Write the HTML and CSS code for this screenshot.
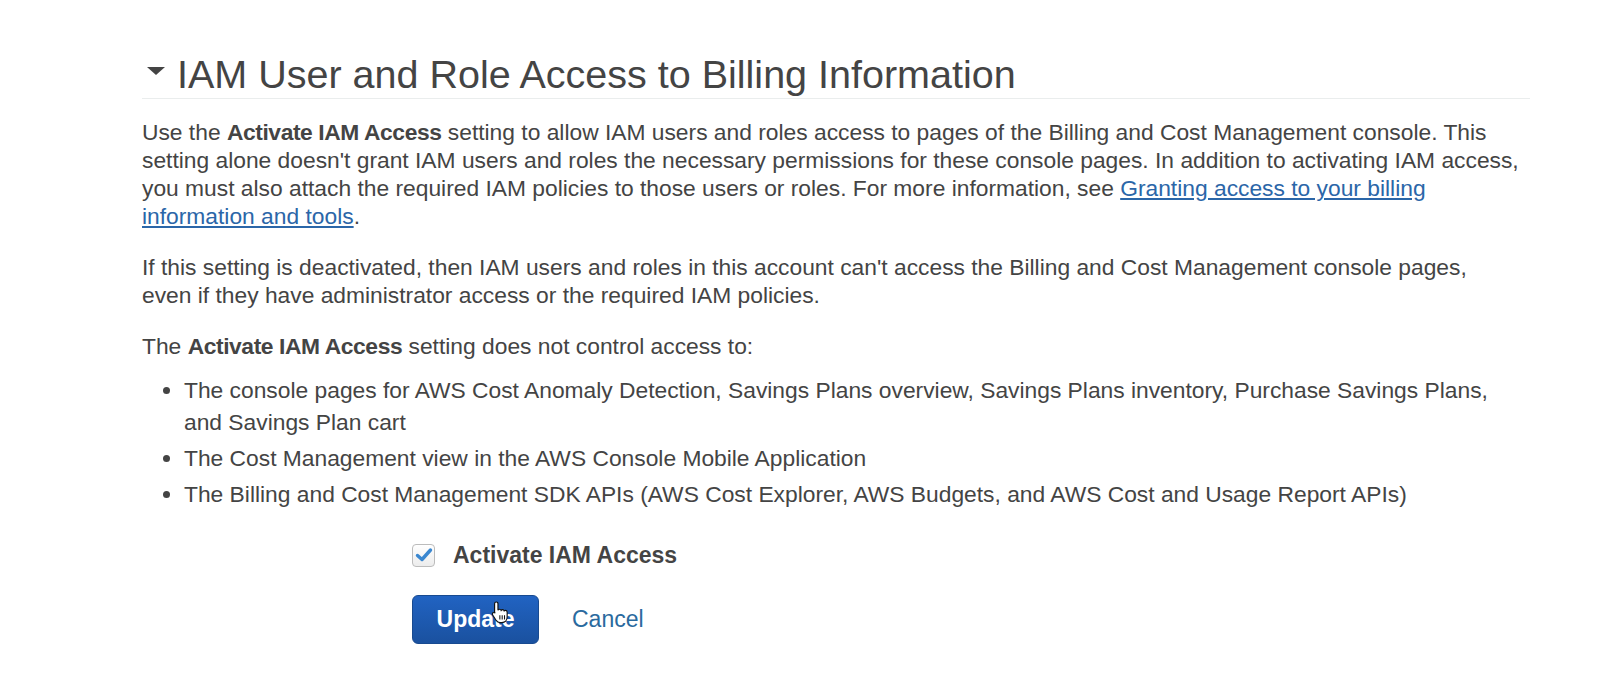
FILE: index.html
```html
<!DOCTYPE html>
<html lang="en">
<head>
  <meta charset="UTF-8">
  <meta name="viewport" content="width=device-width, initial-scale=1.0">
  <title>IAM User and Role Access to Billing Information</title>
  <link rel="stylesheet" href="styles.css">
</head>
<body>
  <div class="section">
    <h2 class="section-title"><span class="caret"></span>IAM User and Role Access to Billing Information</h2>

    <div class="section-body">
      <p>Use the <b>Activate IAM Access</b> setting to allow IAM users and roles access to pages of the Billing and Cost Management console. This setting alone doesn't grant IAM users and roles the necessary permissions for these console pages. In addition to activating IAM access, you must also attach the required IAM policies to those users or roles. For more information, see <a href="#">Granting access to your billing information and tools</a>.</p>

      <p>If this setting is deactivated, then IAM users and roles in this account can't access the Billing and Cost Management console pages, even if they have administrator access or the required IAM policies.</p>

      <p>The <b>Activate IAM Access</b> setting does not control access to:</p>

      <ul>
        <li>The console pages for AWS Cost Anomaly Detection, Savings Plans overview, Savings Plans inventory, Purchase Savings Plans, and Savings Plan cart</li>
        <li>The Cost Management view in the AWS Console Mobile Application</li>
        <li>The Billing and Cost Management SDK APIs (AWS Cost Explorer, AWS Budgets, and AWS Cost and Usage Report APIs)</li>
      </ul>
    </div>

    <!-- Activate form -->
    <div class="form">
      <label class="check-row">
        <span class="checkbox">
          <svg width="18" height="16" viewBox="0 0 18 16"><path d="M2.5 8.5 L7 12.5 L15.5 3" fill="none" stroke="#3a87d0" stroke-width="3.4" stroke-linecap="round" stroke-linejoin="round"/></svg>
        </span>
        Activate IAM Access
      </label>
      <div class="actions">
        <button class="btn-primary" type="button">Update</button>
        <a class="cancel" href="#">Cancel</a>
        <svg class="cursor" width="19" height="24" viewBox="0 0 18 22">
          <path d="M5 1.5c1 0 1.6.7 1.6 1.6v6.2c.3-.6.9-.9 1.5-.9.8 0 1.3.5 1.5 1.1.3-.4.8-.7 1.4-.7.8 0 1.3.5 1.5 1.2.3-.3.7-.5 1.2-.5 1 0 1.6.8 1.6 1.7v4.6c0 3-2 5.2-5 5.2H8.5c-1.6 0-2.7-.7-3.6-2L1.6 13.8c-.5-.8-.3-1.7.4-2.1.7-.4 1.5-.2 2 .5l-.6-.9V3.1C3.4 2.2 4 1.5 5 1.5z" fill="#fff" stroke="#111" stroke-width="1.1"/>
          <path d="M8.4 14v4M10.6 14v4M12.8 14v4" stroke="#111" stroke-width="1"/>
        </svg>
      </div>
    </div>
  </div>
</body>
</html>
```

FILE: styles.css
```css
body {
  font-family: "Liberation Sans", Arial, sans-serif;
  color: #444;
  background-color: #fff;
  margin: 0;
}
.section {
  padding: 52px 70px 40px 142px;
}
.section-title {
  display: flex;
  align-items: center;
  gap: 12px;
  margin: 0;
  padding: 0 0 2px 5px;
  font-size: 39.5px;
  line-height: 44px;
  font-weight: normal;
  border-bottom: 1px solid #eaeded;
}
.caret {
  width: 0;
  height: 0;
  margin-bottom: 6px;
  border-left: 9px solid transparent;
  border-right: 9px solid transparent;
  border-top: 8px solid #444;
}
.section-body {
  max-width: 1377px;
  font-size: 22.8px;
}
.section-body b {
  letter-spacing: -0.4px;
}
p {
  margin: 23px 0 0;
  line-height: 28px;
}
.section-body p:first-child {
  margin-top: 19px;
}
a {
  color: #2b66a8;
}
ul {
  margin: 14px 0 0;
  padding-left: 42px;
  line-height: 32px;
}
li {
  margin-bottom: 4px;
}
.form {
  margin-top: 32px;
  padding-left: 270px;
}
.check-row {
  display: flex;
  align-items: center;
  gap: 18px;
  font-size: 23px;
  line-height: 26px;
  font-weight: bold;
}
.checkbox {
  display: flex;
  align-items: center;
  justify-content: center;
  width: 21px;
  height: 21px;
  border: 1px solid #bcbcbc;
  border-radius: 4px;
  background: linear-gradient(#fff, #ececec);
}
.actions {
  position: relative;
  display: flex;
  align-items: center;
  gap: 33px;
  margin-top: 27px;
}
.btn-primary {
  height: 49px;
  width: 127px;
  font-family: inherit;
  font-size: 23px;
  font-weight: bold;
  color: #fff;
  background: linear-gradient(#2163c2, #1a519f);
  border: 1px solid #184a90;
  border-radius: 6px;
}
.cancel {
  font-size: 23px;
  color: #2a6a9e;
  text-decoration: none;
}
.cursor {
  position: absolute;
  left: 79px;
  top: 5px;
}
```
